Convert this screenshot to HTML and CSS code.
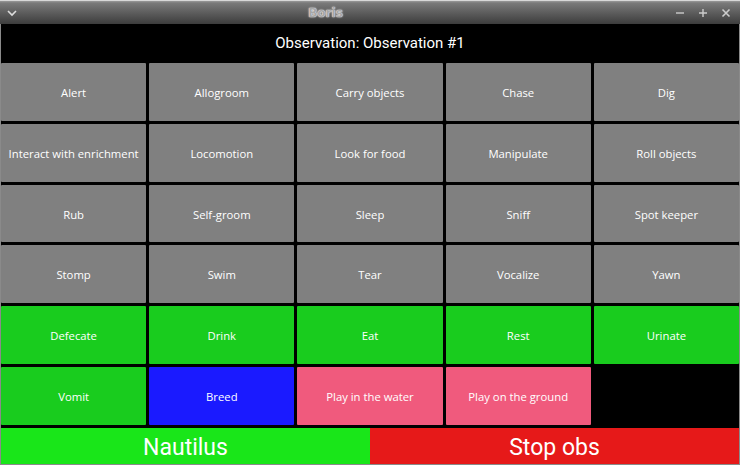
FILE: index.html
```html
<!DOCTYPE html>
<html>
<head>
<meta charset="utf-8">
<link rel="stylesheet" href="styles.css">
</head>
<body>
<div class="window">
  <div class="titlebar">
    <span class="menu-btn"><svg width="10" height="8" viewBox="0 0 10 8"><path d="M1 2 L5 6 L9 2" fill="none" stroke="#ddd" stroke-width="1.6"/></svg></span>
    <span class="title">Boris</span>
    <span class="controls">
      <svg width="10" height="10" viewBox="0 0 10 10"><path d="M1 5 H9" stroke="#ccc" stroke-width="1.4"/></svg>
      <svg width="10" height="10" viewBox="0 0 10 10"><path d="M1 5 H9 M5 1 V9" stroke="#ccc" stroke-width="1.4"/></svg>
      <svg width="10" height="10" viewBox="0 0 10 10"><path d="M1.5 1.5 L8.5 8.5 M8.5 1.5 L1.5 8.5" stroke="#ccc" stroke-width="1.6"/></svg>
    </span>
  </div>
  <div class="content">
    <div class="header">Observation: Observation #1</div>
    <div class="grid">
      <div class="btn gray">Alert</div>
      <div class="btn gray">Allogroom</div>
      <div class="btn gray">Carry objects</div>
      <div class="btn gray">Chase</div>
      <div class="btn gray">Dig</div>
      <div class="btn gray">Interact with enrichment</div>
      <div class="btn gray">Locomotion</div>
      <div class="btn gray">Look for food</div>
      <div class="btn gray">Manipulate</div>
      <div class="btn gray">Roll objects</div>
      <div class="btn gray">Rub</div>
      <div class="btn gray">Self-groom</div>
      <div class="btn gray">Sleep</div>
      <div class="btn gray">Sniff</div>
      <div class="btn gray">Spot keeper</div>
      <div class="btn gray">Stomp</div>
      <div class="btn gray">Swim</div>
      <div class="btn gray">Tear</div>
      <div class="btn gray">Vocalize</div>
      <div class="btn gray">Yawn</div>
      <div class="btn green">Defecate</div>
      <div class="btn green">Drink</div>
      <div class="btn green">Eat</div>
      <div class="btn green">Rest</div>
      <div class="btn green">Urinate</div>
      <div class="btn green">Vomit</div>
      <div class="btn blue">Breed</div>
      <div class="btn pink">Play in the water</div>
      <div class="btn pink">Play on the ground</div>
    </div>
    <div class="bottom">
      <div class="big subject">Nautilus</div>
      <div class="big stop">Stop obs</div>
    </div>
  </div>
</div>
</body>
</html>
```

FILE: styles.css
```css
html, body {
  margin: 0;
  padding: 0;
  width: 740px;
  height: 465px;
  overflow: hidden;
  background: #000;
}
.window {
  width: 740px;
  height: 465px;
  display: flex;
  flex-direction: column;
  background: #8a8a8a;
}
.titlebar {
  height: 24px;
  flex: none;
  display: flex;
  align-items: center;
  background: linear-gradient(#9a9a9a 0px, #7a7a7a 2px, #5c5c5c 12px, #3a3a3a 24px);
  border-top: 1px solid #d8d8d8;
  box-sizing: border-box;
}
.menu-btn {
  width: 24px;
  display: flex;
  justify-content: center;
}
.title {
  flex: 1;
  text-align: center;
  font-family: "DejaVu Sans", sans-serif;
  font-weight: bold;
  font-size: 12px;
  color: #a8a8a8;
  text-shadow: 0 0 2px #fff, 0 0 1px #fff;
  margin-right: 48px;
}
.controls {
  display: flex;
  gap: 13px;
  padding-right: 9px;
  align-items: center;
}
.content {
  flex: 1;
  display: flex;
  flex-direction: column;
  margin: 0 1px 1px 1px;
  background: #000;
  min-height: 0;
}
.header {
  height: 39px;
  flex: none;
  display: flex;
  align-items: center;
  justify-content: center;
  box-sizing: border-box;
  padding-bottom: 2px;
  color: #fff;
  font-family: Roboto, sans-serif;
  font-size: 15px;
}
.grid {
  flex: 1;
  display: grid;
  grid-template-columns: repeat(5, 1fr);
  grid-template-rows: repeat(6, 1fr);
  gap: 3px 3px;
  min-height: 0;
}
.btn {
  display: flex;
  align-items: center;
  justify-content: center;
  padding-top: 1px;
  color: #fff;
  font-family: "Open Sans", sans-serif;
  font-size: 11.3px;
  border-radius: 1px;
}
.gray { background: #808080; }
.green { background: #19cc1e; }
.blue { background: #1a1aff; }
.pink { background: #f05a7d; }
.bottom {
  height: 36px;
  flex: none;
  margin-top: 3px;
  display: grid;
  grid-template-columns: 369px 1fr;
}
.big {
  display: flex;
  align-items: center;
  justify-content: center;
  padding-top: 2px;
  color: #fff;
  font-family: Roboto, sans-serif;
  font-size: 23px;
}
.subject { background: #19e619; }
.stop { background: #e61919; }
```
